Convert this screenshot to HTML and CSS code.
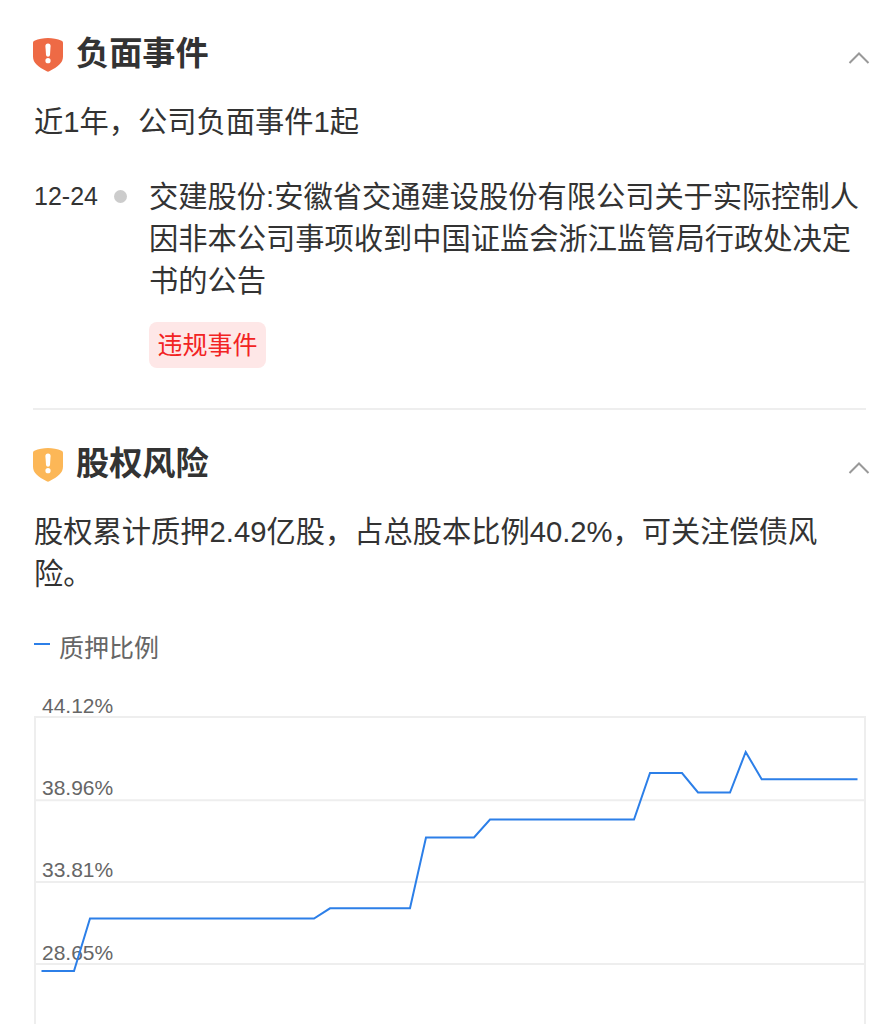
FILE: index.html
```html
<!DOCTYPE html>
<html lang="zh-CN">
	<head>
		<meta charset="UTF-8">
		<title>风险提示</title>
		<meta name="viewport" content="width=device-width, initial-scale=1" />
		<link rel="stylesheet" href="styles.css">
	</head>
	<body>
		<div class="container">
			<!-- 负面事件 -->
			<div class="event_box">
				<div class="title">
					<svg class="shield red" width="30" height="34" viewBox="0 0 30 34">
						<path d="M15 0C19.5 0 24.5 1 28.6 2.7Q30 3.2 30 4.8V18.5C30 25 25 28.7 16.3 33.3Q15 34 13.7 33.3C5 28.7 0 25 0 18.5V4.8Q0 3.2 1.4 2.7C5.5 1 10.5 0 15 0Z"/>
						<path class="mark" d="M12.4 8Q12.4 5.5 15 5.5T17.6 8L17 17Q16.8 18.8 15 18.8T13 17Z"/>
						<circle class="mark" cx="15" cy="22.7" r="2.6"/>
					</svg>
					<h2>负面事件</h2>
					<svg class="arrow" width="22" height="14" viewBox="0 0 22 14"><path d="M1.5 12L11 2.5L20.5 12"/></svg>
				</div>
				<p class="desc">近1年，公司负面事件1起</p>
				<div class="event">
					<span class="date">12-24</span>
					<i class="dot"></i>
					<div class="event_info">
						<p>交建股份:安徽省交通建设股份有限公司关于实际控制人因非本公司事项收到中国证监会浙江监管局行政处决定书的公告</p>
						<span class="tag">违规事件</span>
					</div>
				</div>
			</div>
			<!-- 股权风险 -->
			<div class="stock_box">
				<div class="title">
					<svg class="shield yellow" width="30" height="34" viewBox="0 0 30 34">
						<path d="M15 0C19.5 0 24.5 1 28.6 2.7Q30 3.2 30 4.8V18.5C30 25 25 28.7 16.3 33.3Q15 34 13.7 33.3C5 28.7 0 25 0 18.5V4.8Q0 3.2 1.4 2.7C5.5 1 10.5 0 15 0Z"/>
						<path class="mark" d="M12.4 8Q12.4 5.5 15 5.5T17.6 8L17 17Q16.8 18.8 15 18.8T13 17Z"/>
						<circle class="mark" cx="15" cy="22.7" r="2.6"/>
					</svg>
					<h2>股权风险</h2>
					<svg class="arrow" width="22" height="14" viewBox="0 0 22 14"><path d="M1.5 12L11 2.5L20.5 12"/></svg>
				</div>
				<p class="desc">股权累计质押2.49亿股，占总股本比例40.2%，可关注偿债风险。</p>
				<div class="legend"><i></i><span>质押比例</span></div>
				<svg class="chart" width="833" height="334" viewBox="0 0 833 334">
					<path class="grid" d="M2 334V27H832V334M2 110.3H832M2 192H832M2 274H832"/>
					<g class="label">
						<text x="9" y="22.5">44.12%</text>
						<text x="9" y="105">38.96%</text>
						<text x="9" y="187">33.81%</text>
						<text x="9" y="269.5">28.65%</text>
					</g>
					<polyline class="line" points="8.5,281 41,281 57,228.5 281,228.5 297,218.3 377,218.3 393,147.5 441,147.5 457,129.6 601,129.6 617,83 649,83 665,102.5 697,102.5 712.7,62 728.7,89.2 824.5,89.2"/>
				</svg>
			</div>
		</div>
	</body>
</html>
```

FILE: styles.css
```css
html,body,div,h2,p{margin: 0; padding: 0;}
body{
	height: 1024px;
	overflow: hidden;
	background: #fff;
	color: #333;
	font-family: "Liberation Sans", "Noto Sans CJK SC", sans-serif;
}
.container{
	width: 833px;
	margin-left: 33px;
}
.event_box{
	height: 408px;
	border-bottom: 2px solid #eee;
}
.title{
	height: 50px;
	padding-top: 29px;
	display: flex;
	align-items: center;
}
.title h2{
	margin-left: 13px;
	font-size: 33.2px;
	line-height: 50px;
}
.shield{
	margin-top: 1px;
}
.shield.red{
	fill: #ee6a45;
}
.shield.yellow{
	fill: #fcb757;
}
.shield .mark{
	fill: #fff;
}
.arrow{
	margin: 7px -4px 0 auto;
	fill: none;
	stroke: #999;
	stroke-width: 2;
}
.desc{
	padding: 22px 0 0 1px;
	font-size: 29.25px;
	line-height: 42px;
}
.event{
	margin-top: 33px;
	display: flex;
	align-items: flex-start;
}
.date{
	width: 80px;
	padding-left: 1px;
	font-size: 25px;
	line-height: 41px;
}
.dot{
	width: 13px;
	height: 13px;
	margin-top: 14px;
	border-radius: 50%;
	background: #ccc;
}
.event_info{
	width: 717px;
	margin: 0 -6px 0 22px;
	font-size: 29.25px;
	line-height: 42px;
	flex-shrink: 0;
}
.tag{
	display: inline-block;
	margin-top: 20px;
	padding: 0 8.5px;
	border-radius: 8px;
	background: #fee7e7;
	color: #f22323;
	font-size: 25px;
	line-height: 46px;
}
.legend{
	height: 40px;
	margin-top: 31px;
	display: flex;
	align-items: center;
	color: #666;
	font-size: 25px;
}
.legend i{
	width: 16px;
	height: 2px;
	margin: -4px 9px 0 1px;
	background: #2c7fe8;
}
.chart{
	display: block;
	margin-top: 24px;
}
.grid{
	fill: none;
	stroke: #eee;
	stroke-width: 2;
}
.label{
	fill: #666;
	font-size: 21px;
}
.line{
	fill: none;
	stroke: #2c7fe8;
	stroke-width: 2;
}
```
